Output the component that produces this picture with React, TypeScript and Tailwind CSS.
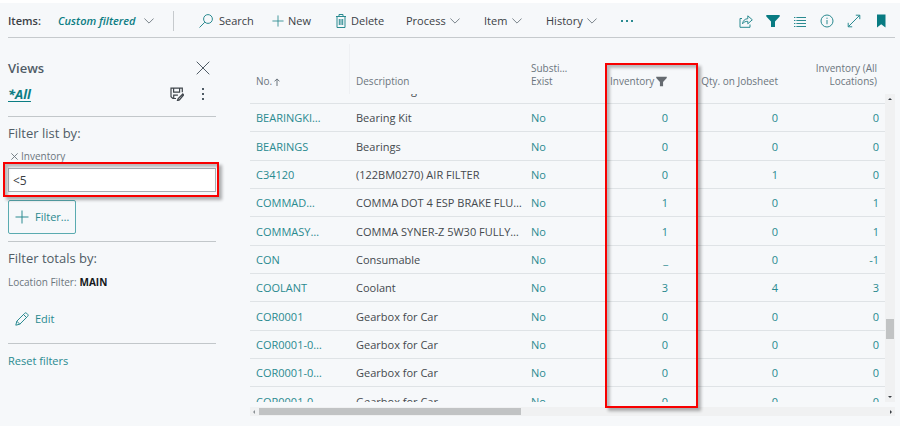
import type { ReactNode } from "react";

type Row = [no: string, description: string, substitutes: string, inventory: string, jobsheet: string, all: string];

const rows: Row[] = [
  ["", "Ball Bearing", "", "", "", ""],
  ["BEARINGKI…", "Bearing Kit", "No", "0", "0", "0"],
  ["BEARINGS", "Bearings", "No", "0", "0", "0"],
  ["C34120", "(122BM0270) AIR FILTER", "No", "0", "1", "0"],
  ["COMMAD…", "COMMA DOT 4 ESP BRAKE FLU…", "No", "1", "0", "1"],
  ["COMMASY…", "COMMA SYNER-Z 5W30 FULLY…", "No", "1", "0", "1"],
  ["CON", "Consumable", "No", "_", "0", "-1"],
  ["COOLANT", "Coolant", "No", "3", "4", "3"],
  ["COR0001", "Gearbox for Car", "No", "0", "0", "0"],
  ["COR0001-0…", "Gearbox for Car", "No", "0", "0", "0"],
  ["COR0001-0…", "Gearbox for Car", "No", "0", "0", "0"],
  ["COR0001-0…", "Gearbox for Car", "No", "0", "0", "0"],
];

function Icon({ children, className = "size-[14px]" }: { children: ReactNode; className?: string }) {
  return (
    <svg viewBox="0 0 14 14" fill="none" stroke="currentColor" className={`shrink-0 ${className}`} aria-hidden="true">
      {children}
    </svg>
  );
}

function Chevron() {
  return (
    <svg viewBox="0 0 10 6" fill="none" stroke="#7b858c" className="h-[6px] w-[10px] shrink-0" aria-hidden="true">
      <path d="M.4.5 5 5.1 9.6.5" />
    </svg>
  );
}

function Plus({ className }: { className?: string }) {
  return (
    <Icon className={className}>
      <path d="M7 .5v13M.5 7h13" />
    </Icon>
  );
}

function Funnel({ className }: { className?: string }) {
  return (
    <Icon className={className}>
      <path d="M.3 1h13.4v1.6L9 7.6V13H5V7.6L.3 2.6z" fill="currentColor" stroke="none" />
    </Icon>
  );
}

function Menu({ label, className }: { label: string; className: string }) {
  return (
    <button type="button" className={`flex shrink-0 items-center justify-between ${className}`}>
      {label}
      <Chevron />
    </button>
  );
}

function Toolbar() {
  return (
    <header className="mr-[5px] ml-2 flex h-[35px] items-center border-b border-[#c6cacd] pt-px text-[#3b4045]">
      <span className="w-[50px] shrink-0 font-semibold">Items:</span>
      <button
        type="button"
        className="flex w-24 shrink-0 items-center justify-between font-semibold whitespace-nowrap text-[#0b7d83] italic"
      >
        Custom filtered
        <Chevron />
      </button>
      <span className="ml-[19px] h-5 w-px shrink-0 bg-[#c6cacd]" />
      <button type="button" className="ml-[25px] flex w-[73px] shrink-0 items-center gap-[6px]">
        <Icon className="size-[14px] text-[#2a8a90]">
          <circle cx="9" cy="5" r="4.4" />
          <path d="M5.8 8.2.5 13.5" />
        </Icon>
        Search
      </button>
      <button type="button" className="flex w-[62px] shrink-0 items-center gap-1">
        <span className="text-[#2a8a90]">
          <Plus className="size-3" />
        </span>
        New
      </button>
      <button type="button" className="flex w-[72px] shrink-0 items-center gap-[3px]">
        <Icon className="size-[14px] text-[#2a8a90]">
          <path d="M2 2.5h10M5 2.5v-2h4v2M3 2.5v11h8v-11M5.3 5v6M7 5v6M8.7 5v6" />
        </Icon>
        Delete
      </button>
      <Menu label="Process" className="w-[54px]" />
      <Menu label="Item" className="ml-6 w-[38px]" />
      <Menu label="History" className="ml-6 w-[51px]" />
      <button type="button" aria-label="More" className="ml-6 flex shrink-0 gap-[3px]">
        <span className="size-[2px] bg-[#2a8a90]" />
        <span className="size-[2px] bg-[#2a8a90]" />
        <span className="size-[2px] bg-[#2a8a90]" />
      </button>
      <div className="mr-[7px] ml-auto flex items-center gap-[13px] text-[#2a8a90]">
        <button type="button" aria-label="Share">
          <Icon>
            <path d="M3 4.5H1v8.8h10V10.5" />
            <path d="M3.5 9.8C4 6.6 5.8 4.8 8.8 4.7V1.8l4.5 4-4.5 4V7.3c-2.3 0-4 .7-5.3 2.5z" />
          </Icon>
        </button>
        <button type="button" aria-label="Filter" className="text-[#087b82]">
          <Funnel />
        </button>
        <button type="button" aria-label="List">
          <Icon>
            <path d="M1 3.5h1.4M3.4 3.5H13M1 6.5h1.4M3.4 6.5H13M1 9.5h1.4M3.4 9.5H13M1 12.5h1.4M3.4 12.5H13" />
          </Icon>
        </button>
        <button type="button" aria-label="Information">
          <Icon>
            <circle cx="7" cy="7" r="6" />
            <path d="M7 6v4.2M7 3.7v1.2" />
          </Icon>
        </button>
        <button type="button" aria-label="Expand">
          <Icon>
            <path d="M1.3 12.7 12.7 1.3M8.8 1.2h4v4M1.2 8.8v4h4" />
          </Icon>
        </button>
        <button type="button" aria-label="Bookmark" className="text-[#087b82]">
          <Icon>
            <path d="M3 .5h8.5v13L7.2 10.3 3 13.5z" fill="currentColor" stroke="none" />
          </Icon>
        </button>
      </div>
    </header>
  );
}

const outline =
  "pointer-events-none absolute border-2 border-[#f80000] shadow-[3px_3px_3px_rgba(0,0,0,0.3),inset_3px_3px_3px_rgba(0,0,0,0.25)]";

function Sidebar() {
  return (
    <aside className="ml-2 w-[208px] shrink-0 pt-5 text-[#505c66]">
      <div className="flex h-5 items-center justify-between pr-[6px]">
        <h2 className="text-[13px] font-semibold">Views</h2>
        <button type="button" aria-label="Close">
          <Icon>
            <path d="m.7.7 12.6 12.6M13.3.7.7 13.3" />
          </Icon>
        </button>
      </div>
      <div className="mt-[6px] flex h-[33px] items-start border-b border-[#c2c7ca]">
        <a href="#all" className="text-[13px] leading-5 font-bold text-[#0b7d83] italic underline underline-offset-2">
          *All
        </a>
        <button type="button" aria-label="Save view" className="mt-[3px] ml-auto text-[#3f454b]">
          <Icon>
            <path
              d="M6 11.5H2.8L1 9.7V1.2h11.3v4M3.6 1.4v3.8h6V1.4M3.7 11.3V8.2h4.2M12.8 7l-4.6 4.6-.8 2 2-.7L13.6 8z"
              strokeWidth="1.2"
            />
          </Icon>
        </button>
        <button type="button" aria-label="View options" className="mt-1 mr-3 ml-[18px] flex flex-col gap-[3px]">
          <span className="size-[2px] bg-[#505c66]" />
          <span className="size-[2px] bg-[#505c66]" />
          <span className="size-[2px] bg-[#505c66]" />
        </button>
      </div>
      <h3 className="mt-[6px] text-[13px] leading-5">Filter list by:</h3>
      <div className="mt-[5px] flex h-4 items-center gap-[3px] pl-[3px] text-[10px] text-[#6b757d]">
        <button type="button" aria-label="Remove filter">
          <Icon className="size-[7px]">
            <path d="m.7.7 12.6 12.6M13.3.7.7 13.3" strokeWidth="1.8" />
          </Icon>
        </button>
        <label htmlFor="inventory-filter">Inventory</label>
      </div>
      <div className="relative mt-1">
        <input
          id="inventory-filter"
          defaultValue="<5"
          className="block h-6 w-full border border-[#a9b0b5] bg-white px-1 text-[12px] text-[#3b4045] outline-none"
        />
        <div className={`${outline} -top-[6px] -right-[3px] -bottom-[5px] -left-[5px]`} />
      </div>
      <button
        type="button"
        className="mt-2 flex h-[34px] w-[68px] items-center gap-[6px] rounded-[2px] border border-[#5aabb0] pl-[6px] text-[#2a8a90]"
      >
        <Plus />
        Filter…
      </button>
      <div className="mt-[7px] border-t border-[#c2c7ca] pt-[6px]">
        <h3 className="text-[13px] leading-5">Filter totals by:</h3>
        <p className="mt-[6px] flex h-4 items-center gap-[3px] text-[10px] text-[#6b757d]">
          Location Filter: <strong className="font-bold text-[#15181b]">MAIN</strong>
        </p>
      </div>
      <div className="mt-[19px] border-b border-[#c2c7ca] pb-[14px] pl-[7px]">
        <button type="button" className="flex h-5 items-center gap-[6px] text-[#2a8a90]">
          <Icon>
            <path d="m.8 13.2 1-4L9.7 1.3a1.4 1.4 0 0 1 2 0l1 1a1.4 1.4 0 0 1 0 2l-7.9 7.9zM8.5 2.5l3 3M1.8 9.2l3 3" />
          </Icon>
          Edit
        </button>
      </div>
      <a href="#reset" className="mt-[7px] block leading-5 text-[#2a8a90]">
        Reset filters
      </a>
    </aside>
  );
}

const th = "sticky top-0 h-[50px] bg-[#f6f8fa] pb-[6px] align-bottom font-normal leading-[13px]";
const td = "border-b border-[#dfe3e6] pt-px pb-0 whitespace-nowrap";

function ItemsTable() {
  return (
    <section aria-label="Items" className="relative mr-[5px] ml-[34px] min-w-0 flex-1 pt-[6px]">
      <div className="flex">
        <div className="h-[358px] min-w-0 flex-1 overflow-hidden">
          <table className="-mt-[18px] w-full table-fixed border-separate border-spacing-0 text-left">
            <colgroup>
              <col className="w-[100px]" />
              <col />
              <col className="w-[79px]" />
              <col className="w-[68px]" />
              <col className="w-[110px]" />
              <col className="w-[103px]" />
            </colgroup>
            <thead className="text-[10px] text-[#6b757d]">
              <tr>
                <th className={`${th} border-r border-[#eef0f3] pl-[6px]`}>
                  <span className="flex items-center gap-[2px]">
                    No.
                    <svg viewBox="0 0 6 8" fill="none" stroke="currentColor" className="h-2 w-[6px]" aria-hidden="true">
                      <path d="M3 8V1M.5 3.4 3 .9l2.5 2.5" />
                    </svg>
                  </span>
                </th>
                <th className={`${th} pl-[6px]`}>Description</th>
                <th className={`${th} pl-[6px]`}>
                  Substi…
                  <br />
                  Exist
                </th>
                <th className={`${th} pl-[6px]`}>
                  <span className="flex items-center gap-[2px]">
                    Inventory
                    <Funnel className="size-[11px] text-[#666b70]" />
                  </span>
                </th>
                <th className={`${th} pr-1 text-right whitespace-nowrap`}>Qty. on Jobsheet</th>
                <th className={`${th} pr-2 text-right whitespace-nowrap`}>
                  Inventory (All
                  <br />
                  Locations)
                </th>
              </tr>
            </thead>
            <tbody className="text-[#2a8a90]">
              {rows.map(([no, description, substitutes, inventory, jobsheet, all], index) => (
                <tr key={index} className="h-7 nth-[3n]:h-[29px]">
                  <td className={`${td} pl-[6px]`}>
                    <a href="#item">{no}</a>
                  </td>
                  <td className={`${td} pl-[6px] text-[#44494e]`}>{description}</td>
                  <td className={`${td} pl-[6px]`}>
                    <a href="#substitutes">{substitutes}</a>
                  </td>
                  <td className={`${td} pr-1 text-right`}>
                    <a href="#inventory">{inventory}</a>
                  </td>
                  <td className={`${td} pr-1 text-right`}>
                    <a href="#jobsheet">{jobsheet}</a>
                  </td>
                  <td className={`${td} pr-[6px] text-right`}>
                    <a href="#locations">{all}</a>
                  </td>
                </tr>
              ))}
            </tbody>
          </table>
        </div>
        <div className="mt-[50px] flex w-[10px] shrink-0 flex-col items-center justify-between bg-[#f0f1f2] py-1 text-[#3b4045]">
          <svg viewBox="0 0 4 2" className="h-[2px] w-1" aria-hidden="true">
            <path d="M0 2 2 0l2 2z" fill="currentColor" />
          </svg>
          <span className="mt-[162px] h-5 w-2 bg-[#c1c3c4]" />
          <svg viewBox="0 0 4 2" className="h-[2px] w-1" aria-hidden="true">
            <path d="m0 0 2 2 2-2z" fill="currentColor" />
          </svg>
        </div>
      </div>
      <div className="mt-[5px] flex h-[9px] items-center bg-[#f0f1f2] px-[3px] text-[#3b4045]">
        <svg viewBox="0 0 2 4" className="h-1 w-[2px] text-[#8a9094]" aria-hidden="true">
          <path d="M2 0 0 2l2 2z" fill="currentColor" />
        </svg>
        <span className="ml-1 h-[7px] w-[41%] bg-[#c1c3c4]" />
        <svg viewBox="0 0 2 4" className="ml-auto h-1 w-[2px]" aria-hidden="true">
          <path d="m0 0 2 2-2 2z" fill="currentColor" />
        </svg>
      </div>
      <div className={`${outline} top-[25px] right-[197px] bottom-[8px] w-[93px]`} />
    </section>
  );
}

export default function App() {
  return (
    <div className="border-t-[3px] border-white bg-[#f6f8fa] pb-[10px] font-['Open_Sans','Noto_Sans',sans-serif] text-[11px] leading-4">
      <Toolbar />
      <main className="flex">
        <Sidebar />
        <ItemsTable />
      </main>
    </div>
  );
}
